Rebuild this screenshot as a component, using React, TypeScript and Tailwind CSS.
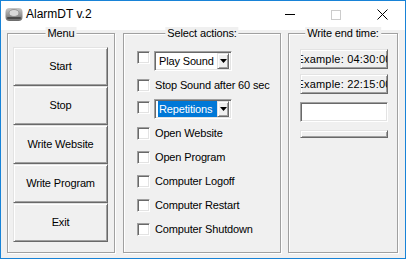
const font = { fontFamily: '"Liberation Sans", Arial, sans-serif' };

const raised =
  "border border-t-[#e3e3e3] border-l-[#e3e3e3] border-b-[#696969] border-r-[#696969] bg-[#f0f0f0] shadow-[inset_1px_1px_0_#fff,inset_-1px_-1px_0_#a0a0a0]";
const sunken =
  "border border-t-[#a0a0a0] border-l-[#a0a0a0] border-b-white border-r-white bg-white shadow-[inset_1px_1px_0_#696969,inset_-1px_-1px_0_#e3e3e3]";

function GroupBox({ title, className, children }: { title: string; className: string; children?: React.ReactNode }) {
  return (
    <div
      className={`relative h-[220px] shrink-0 border border-[#a0a0a0] shadow-[inset_1px_1px_0_#fff,1px_1px_0_#fff] ${className}`}
    >
      <span className="absolute left-1/2 top-[-7px] -translate-x-1/2 whitespace-nowrap bg-[#f0f0f0] px-[2px] text-[11px] leading-[13px] tracking-[-0.15px] text-black">
        {title}
      </span>
      {children}
    </div>
  );
}

function Check() {
  return <div className={`h-[13px] w-[13px] shrink-0 ${sunken}`} />;
}

function Combo({ label, selected }: { label: string; selected?: boolean }) {
  return (
    <div className={`flex h-[20px] w-[78px] items-center pl-[2px] pr-[2px] ${sunken}`}>
      <div className="flex-1 pl-[1px]">
        <span
          className={`inline-block w-[59px] pl-[1px] leading-[16px] ${selected ? "bg-[#0078d7] text-white" : "text-black"}`}
        >
          {label}
        </span>
      </div>
      <div className={`flex h-[16px] w-[16px] items-center justify-center ${raised}`}>
        <svg width="7" height="4" viewBox="0 0 7 4">
          <path d="M0 0h7L3.5 4z" fill="#000" />
        </svg>
      </div>
    </div>
  );
}

function Row({ children }: { children: React.ReactNode }) {
  return <div className="flex h-[24px] items-center gap-[4px]">{children}</div>;
}

export default function App() {
  const menu = ["Start", "Stop", "Write Website", "Write Program", "Exit"];
  const actions = ["Open Website", "Open Program", "Computer Logoff", "Computer Restart", "Computer Shutdown"];

  return (
    <div
      style={font}
      className="flex h-[259px] w-[406px] flex-col overflow-hidden border border-[#1883d7] bg-[#f0f0f0] text-[11px] tracking-[-0.15px] text-black"
    >
      {/* Title bar */}
      <div className="flex h-[29px] shrink-0 items-center bg-white">
        <svg width="18" height="16" viewBox="0 0 18 16" className="ml-[4px] mt-[-3px]">
          <defs>
            <linearGradient id="g" x1="0" y1="0" x2="0" y2="1">
              <stop offset="0" stopColor="#c8c8c8" />
              <stop offset="1" stopColor="#6a6a6a" />
            </linearGradient>
          </defs>
          <rect x="0.5" y="2" width="17" height="13" rx="4" fill="url(#g)" />
          <ellipse cx="9" cy="7" rx="5" ry="3.5" fill="#d9d9d9" stroke="#8a8a8a" strokeWidth="0.8" />
          <rect x="2" y="11" width="14" height="2" rx="1" fill="#4a4a4a" />
        </svg>
        <span className="ml-[3px] mt-[-3px] text-[12px] tracking-[0px] text-black">AlarmDT v.2</span>
        <div className="ml-auto flex h-full items-center">
          <div className="flex h-full w-[46px] items-center justify-center">
            <div className="mt-[-2px] h-px w-[10px] bg-black" />
          </div>
          <div className="flex h-full w-[46px] items-center justify-center">
            <div className="mt-[-2px] h-[10px] w-[10px] border border-[#cccccc]" />
          </div>
          <div className="flex h-full w-[46px] items-center justify-center">
            <svg width="11" height="11" viewBox="0 0 11 11" className="mt-[-2px]">
              <path d="M0.5 0.5l10 10M10.5 0.5l-10 10" stroke="#000" strokeWidth="1" />
            </svg>
          </div>
        </div>
      </div>

      {/* Client area */}
      <div className="flex pl-[6px] pt-[3px]">
        <GroupBox title="Menu" className="w-[108px]">
          <div className="flex flex-col pl-[5px] pt-[13px]">
            {menu.map(m => (
              <button key={m} className={`flex h-[39px] w-[95px] items-center justify-center ${raised}`}>
                {m}
              </button>
            ))}
          </div>
        </GroupBox>

        <GroupBox title="Select actions:" className="ml-[8px] w-[158px]">
          <div className="flex flex-col pl-[13px] pt-[15px]">
            <Row>
              <div className="self-start pt-[2px]">
                <Check />
              </div>
              <Combo label="Play Sound" />
            </Row>
            <Row>
              <Check />
              <span className="pl-px">Stop Sound after 60 sec</span>
            </Row>
            <Row>
              <div className="self-start pt-[4px]">
                <Check />
              </div>
              <Combo label="Repetitions" selected />
            </Row>
            {actions.map(a => (
              <Row key={a}>
                <Check />
                <span className="pl-px">{a}</span>
              </Row>
            ))}
          </div>
        </GroupBox>

        <GroupBox title="Write end time:" className="ml-[7px] w-[110px]">
          <div className="flex flex-col pl-[11px] pt-[15px]">
            <div className={`flex h-[20px] w-[88px] items-center justify-center overflow-hidden whitespace-nowrap ${raised}`}>
              <span className="shrink-0 tracking-[0.2px]">Example: 04:30:00</span>
            </div>
            <div className={`mt-[5px] flex h-[20px] w-[88px] items-center justify-center overflow-hidden whitespace-nowrap ${raised}`}>
              <span className="shrink-0 tracking-[0.2px]">Example: 22:15:00</span>
            </div>
            <div className={`mt-[8px] h-[20px] w-[88px] ${sunken}`} />
            <div className={`mt-[8px] h-[8px] w-[88px] ${raised}`} />
          </div>
        </GroupBox>
      </div>
    </div>
  );
}
